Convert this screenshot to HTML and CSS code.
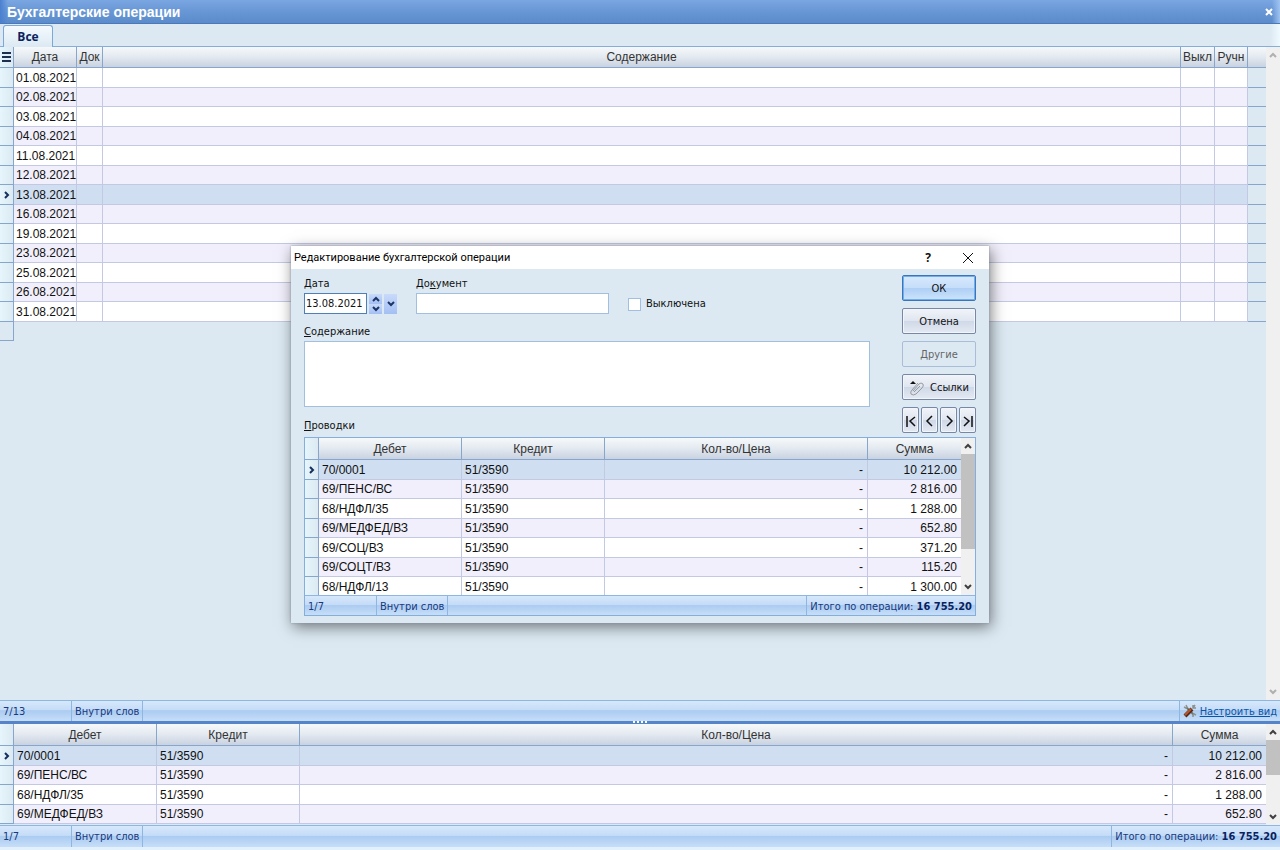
FILE: index.html
```html
<!DOCTYPE html>
<html lang="ru">
<head>
<meta charset="utf-8">
<title>Бухгалтерские операции</title>
<link rel="stylesheet" href="styles.css">
</head>
<body>
<svg class="defs" aria-hidden="true">
  <symbol id="up" viewBox="0 0 8 6"><path d="M1 5 4 2 7 5" fill="none" stroke="currentColor" stroke-width="2"/></symbol>
  <symbol id="down" viewBox="0 0 8 6"><path d="M1 1 4 4 7 1" fill="none" stroke="currentColor" stroke-width="2"/></symbol>
  <symbol id="mark" viewBox="0 0 6 8"><path d="M1 1 4 4 1 7" fill="none" stroke="currentColor" stroke-width="2"/></symbol>
</svg>

<header class="titlebar">
  <h1>Бухгалтерские операции</h1>
  <button class="close" aria-label="Закрыть"><svg width="8" height="8" viewBox="0 0 8 8"><path d="M1 1 7 7M7 1 1 7" stroke="#fff" stroke-width="2"/></svg></button>
</header>
<nav class="tabs"><button class="tab">Все</button></nav>

<main class="pane main-pane">
  <div class="view">
    <table class="grid">
      <colgroup><col class="c-mark"><col class="c-date"><col class="c-doc"><col><col class="c-off"><col class="c-man"><col class="c-end"></colgroup>
      <thead><tr><th class="rh menu"><svg width="9" height="10" viewBox="0 0 9 10"><path d="M0 1H9M0 5H9M0 9H9" stroke="#1d3050" stroke-width="2"/></svg></th><th>Дата</th><th>Док</th><th>Содержание</th><th>Выкл</th><th>Ручн</th><th></th></tr></thead>
      <tbody>
        <tr><td class="rh"></td><td class="day">01.08.2021</td><td></td><td></td><td></td><td></td><td class="re"></td></tr>
        <tr><td class="rh"></td><td class="day">02.08.2021</td><td></td><td></td><td></td><td></td><td class="re"></td></tr>
        <tr><td class="rh"></td><td class="day">03.08.2021</td><td></td><td></td><td></td><td></td><td class="re"></td></tr>
        <tr><td class="rh"></td><td class="day">04.08.2021</td><td></td><td></td><td></td><td></td><td class="re"></td></tr>
        <tr><td class="rh"></td><td class="day">11.08.2021</td><td></td><td></td><td></td><td></td><td class="re"></td></tr>
        <tr><td class="rh"></td><td class="day">12.08.2021</td><td></td><td></td><td></td><td></td><td class="re"></td></tr>
        <tr class="sel"><td class="rh"><svg width="6" height="8"><use href="#mark"/></svg></td><td class="day">13.08.2021</td><td></td><td></td><td></td><td></td><td class="re"></td></tr>
        <tr><td class="rh"></td><td class="day">16.08.2021</td><td></td><td></td><td></td><td></td><td class="re"></td></tr>
        <tr><td class="rh"></td><td class="day">19.08.2021</td><td></td><td></td><td></td><td></td><td class="re"></td></tr>
        <tr><td class="rh"></td><td class="day">23.08.2021</td><td></td><td></td><td></td><td></td><td class="re"></td></tr>
        <tr><td class="rh"></td><td class="day">25.08.2021</td><td></td><td></td><td></td><td></td><td class="re"></td></tr>
        <tr><td class="rh"></td><td class="day">26.08.2021</td><td></td><td></td><td></td><td></td><td class="re"></td></tr>
        <tr><td class="rh"></td><td class="day">31.08.2021</td><td></td><td></td><td></td><td></td><td class="re"></td></tr>
        <tr class="blank"><td class="rh"></td><td colspan="6"></td></tr>
      </tbody>
    </table>
  </div>
  <div class="scroll idle">
    <button aria-label="Вверх"><svg width="8" height="6"><use href="#up"/></svg></button>
    <button aria-label="Вниз"><svg width="8" height="6"><use href="#down"/></svg></button>
  </div>
</main>
<div class="status">
  <span class="count">7/13</span><span class="mode">Внутри слов</span>
  <span class="right setup"><svg width="14" height="14" viewBox="0 0 14 14"><path d="M3 3 11 11" stroke="#6d7674" stroke-width="2"/><path d="M1 3 3 4 4 3 3 1M10 13 10 11 11 10 13 11" fill="none" stroke="#8d9490" stroke-width="1.5"/><path d="M10 4 12 1M13 4 10 4 10 1" fill="none" stroke="#8b918d" stroke-width="1.5"/><path d="M2 12 9 5" stroke="#5b2a16" stroke-width="4"/><path d="M2 11 8 5" stroke="#b5582e" stroke-width="2"/></svg><a href="#setup">Настроить вид</a></span>
</div>
<div class="splitter"><svg width="14" height="3" viewBox="0 0 14 3"><path d="M0 1H14" stroke="#fff" stroke-width="2" stroke-dasharray="2 2"/></svg></div>

<section class="pane">
  <div class="view bottom-view">
    <table class="grid">
      <colgroup><col class="c-mark"><col class="c-acc"><col class="c-acc"><col><col class="c-sum"></colgroup>
      <thead><tr><th class="rh"></th><th>Дебет</th><th>Кредит</th><th>Кол-во/Цена</th><th>Сумма</th></tr></thead>
      <tbody>
        <tr class="sel"><td class="rh"><svg width="6" height="8"><use href="#mark"/></svg></td><td>70/0001</td><td>51/3590</td><td class="num">-</td><td class="num">10 212.00</td></tr>
        <tr><td class="rh"></td><td>69/ПЕНС/ВС</td><td>51/3590</td><td class="num">-</td><td class="num">2 816.00</td></tr>
        <tr><td class="rh"></td><td>68/НДФЛ/35</td><td>51/3590</td><td class="num">-</td><td class="num">1 288.00</td></tr>
        <tr><td class="rh"></td><td>69/МЕДФЕД/ВЗ</td><td>51/3590</td><td class="num">-</td><td class="num">652.80</td></tr>
      </tbody>
    </table>
  </div>
  <div class="scroll">
    <button aria-label="Вверх"><svg width="8" height="6"><use href="#up"/></svg></button>
    <div class="thumb short"></div>
    <button aria-label="Вниз"><svg width="8" height="6"><use href="#down"/></svg></button>
  </div>
</section>
<div class="status last">
  <span class="count">1/7</span><span class="mode">Внутри слов</span>
  <span class="right">Итого по операции: <b>16 755.20</b></span>
</div>

<div class="overlay">
<div class="dialog" role="dialog" aria-labelledby="dlg-title">
  <div class="dlg-head">
    <h2 id="dlg-title">Редактирование бухгалтерской операции</h2>
    <button class="help">?</button>
    <button class="x" aria-label="Закрыть"><svg width="10" height="10" viewBox="0 0 10 10"><path d="M0 0 10 10M10 0 0 10" stroke="#111"/></svg></button>
  </div>
  <div class="dlg-body">
    <div class="form">
      <div class="fields">
        <div class="line">
          <div class="field date">
            <label for="date"><u>Д</u>ата</label>
            <div class="picker">
              <input id="date" type="text" value="13.08.2021">
              <div class="spin"><button aria-label="Больше"><svg width="8" height="6"><use href="#up"/></svg></button><button aria-label="Меньше"><svg width="8" height="6"><use href="#down"/></svg></button></div>
              <button class="drop" aria-label="Календарь"><svg width="8" height="6"><use href="#down"/></svg></button>
            </div>
          </div>
          <div class="field doc"><label for="doc">До<u>к</u>умент</label><input id="doc" type="text"></div>
          <label class="check"><input type="checkbox">Выключена</label>
        </div>
        <div class="field"><label for="text"><u>С</u>одержание</label><textarea id="text"></textarea></div>
        <div class="caption"><u>П</u>роводки</div>
      </div>
      <div class="actions">
        <button class="btn primary">ОК</button>
        <button class="btn">Отмена</button>
        <button class="btn" disabled>Другие</button>
        <button class="btn"><svg width="16" height="16" viewBox="0 0 16 16"><path d="M1 4 4 1 7 4Z" fill="#111"/><path d="M4 11 10 4Q12 2 14 4 15 6 13 8L7 14Q4 16 2 14 1 12 3 10L9 3M5 12 11 6" fill="none" stroke="#999c9e"/></svg>Ссылки</button>
        <div class="moves">
          <button class="btn" aria-label="Первая"><svg width="10" height="12" viewBox="0 0 10 12"><path d="M1 1V12M9 2 4 6 9 11" fill="none" stroke="#111" stroke-width="1.5"/></svg></button>
          <button class="btn" aria-label="Предыдущая"><svg width="10" height="12" viewBox="0 0 10 12"><path d="M7 1 2 6 7 11" fill="none" stroke="#111" stroke-width="1.5"/></svg></button>
          <button class="btn" aria-label="Следующая"><svg width="10" height="12" viewBox="0 0 10 12"><path d="M3 1 8 6 3 11" fill="none" stroke="#111" stroke-width="1.5"/></svg></button>
          <button class="btn" aria-label="Последняя"><svg width="10" height="12" viewBox="0 0 10 12"><path d="M9 1V12M1 2 6 6 1 11" fill="none" stroke="#111" stroke-width="1.5"/></svg></button>
        </div>
      </div>
    </div>
    <div class="entries">
      <div class="pane">
        <div class="view entries-view">
          <table class="grid">
            <colgroup><col class="c-mark"><col class="c-acc"><col class="c-acc"><col><col class="c-sum"></colgroup>
            <thead><tr><th class="rh"></th><th>Дебет</th><th>Кредит</th><th>Кол-во/Цена</th><th>Сумма</th></tr></thead>
            <tbody>
              <tr class="sel"><td class="rh"><svg width="6" height="8"><use href="#mark"/></svg></td><td>70/0001</td><td>51/3590</td><td class="num">-</td><td class="num">10 212.00</td></tr>
              <tr><td class="rh"></td><td>69/ПЕНС/ВС</td><td>51/3590</td><td class="num">-</td><td class="num">2 816.00</td></tr>
              <tr><td class="rh"></td><td>68/НДФЛ/35</td><td>51/3590</td><td class="num">-</td><td class="num">1 288.00</td></tr>
              <tr><td class="rh"></td><td>69/МЕДФЕД/ВЗ</td><td>51/3590</td><td class="num">-</td><td class="num">652.80</td></tr>
              <tr><td class="rh"></td><td>69/СОЦ/ВЗ</td><td>51/3590</td><td class="num">-</td><td class="num">371.20</td></tr>
              <tr><td class="rh"></td><td>69/СОЦТ/ВЗ</td><td>51/3590</td><td class="num">-</td><td class="num">115.20</td></tr>
              <tr><td class="rh"></td><td>68/НДФЛ/13</td><td>51/3590</td><td class="num">-</td><td class="num">1 300.00</td></tr>
            </tbody>
          </table>
        </div>
        <div class="scroll">
          <button aria-label="Вверх"><svg width="8" height="6"><use href="#up"/></svg></button>
          <div class="thumb long"></div>
          <button aria-label="Вниз"><svg width="8" height="6"><use href="#down"/></svg></button>
        </div>
      </div>
      <div class="status">
        <span class="count">1/7</span><span class="mode">Внутри слов</span>
        <span class="right">Итого по операции: <b>16 755.20</b></span>
      </div>
    </div>
  </div>
</div>
</div>
</body>
</html>
```
FILE: styles.css
```css
* { box-sizing: border-box; }

body {
  margin: 0;
  min-height: 100vh;
  display: flex;
  flex-direction: column;
  background: #dce9f2;
  color: #111;
  font: 11px/16px "DejaVu Sans Condensed", "Noto Sans", sans-serif;
}

button, input, textarea {
  margin: 0;
  padding: 0;
  border: 0;
  border-radius: 0;
  background: none;
  color: inherit;
  font: inherit;
}

svg { display: block; flex: none; }
.defs { position: absolute; width: 0; height: 0; }

/* Window title and tabs */
.titlebar {
  display: flex;
  align-items: center;
  justify-content: space-between;
  height: 24px;
  padding: 0 7px;
  background: linear-gradient(90deg, #4a7fd0, transparent 8px, transparent calc(100% - 8px), #9fc4f0), linear-gradient(#7aa7e2, #6a98d6 45%, #5b8bca);
  border-bottom: 1px solid #4a78b8;
  color: #fff;
}
.titlebar h1 { margin: 0; font: bold 14px/22px "Liberation Sans", Arial, sans-serif; }
.tabs {
  height: 23px;
  padding: 1px 3px 0;
  background: linear-gradient(90deg, transparent calc(100% - 10px), #effaff), #dce9f2;
  border-bottom: 1px solid #86aedb;
}
.tab {
  width: 50px;
  height: 22px;
  border: 1px solid #7ba7dc;
  border-bottom: 0;
  border-radius: 3px 3px 0 0;
  background: linear-gradient(#f4fafe, #dce9f2);
  color: #0a2260;
  font: bold 12px/20px "Open Sans", "Noto Sans", sans-serif;
}

/* Data grids */
.pane { display: flex; }
.main-pane { flex: 1; }
.view { flex: 1; min-width: 0; overflow: hidden; }
.bottom-view { height: 101px; }
.entries-view { height: 157px; }

.grid {
  width: 100%;
  table-layout: fixed;
  border-collapse: separate;
  border-spacing: 0;
  font: 12px/16px "Liberation Sans", Arial, sans-serif;
}
.c-mark { width: 14px; }
.c-date { width: 63px; }
.c-doc { width: 26px; }
.c-off { width: 34px; }
.c-man { width: 33px; }
.c-end { width: 18px; }
.c-acc { width: 143px; }
.c-sum { width: 93px; }

.grid th {
  height: 22px;
  padding: 0;
  border-right: 1px solid #87a6cb;
  border-bottom: 1px solid #87a6cb;
  background: linear-gradient(#f6f9fb, #e3e9f0 50%, #c9d2e1);
  color: #333;
  font-weight: normal;
  white-space: nowrap;
}
.main-pane th { height: 21px; }
.grid th:last-child { border-right: 0; }
.grid td {
  height: 19px;
  padding: 0 3px;
  border-right: 1px solid #c3c9e2;
  border-bottom: 1px solid #c3c9e2;
  background: #fff;
  line-height: 18px;
  white-space: nowrap;
}
.grid td.day { padding: 0 2px; }
.grid tr:nth-child(odd) td { height: 20px; }
.grid tr:nth-child(even) td { background: #f0effb; }
.grid tr.sel td { background: #cfdff1; }
.grid td:last-child { border-right: 0; }
.grid td.num { padding-right: 4px; text-align: right; }
.grid tr .rh,
.grid tr td.rh {
  padding: 0 0 0 4px;
  border-color: #87a6cb;
  background: linear-gradient(90deg, #e6f6fc, #dce9f2);
  color: #14305e;
}
.grid tr .menu { padding: 0 0 0 2px; }
.grid tr td.re { border-color: #87a6cb; background: #dce9f2; }
.grid tr.blank td { border: 0; background: none; }
.grid tr.blank td.rh { border: solid #87a6cb; border-width: 0 1px 1px 0; }

.scroll {
  display: flex;
  flex-direction: column;
  width: 14px;
  background: #f0f0f0;
  color: #404040;
}
.scroll button {
  display: flex;
  align-items: center;
  justify-content: center;
  height: 16px;
}
.scroll button:last-child { margin-top: auto; }
.idle { color: #b0b0b0; }
.thumb { background: #c1c1c1; }
.short { height: 35px; }
.long { height: 95px; }

/* Status bars */
.status {
  display: flex;
  height: 21px;
  border-top: 1px solid #8fb5e2;
  background: linear-gradient(#d6e8fb, #c5dcf7 45%, #abcbf1 48%, #c6def8);
  color: #17397e;
  line-height: 21px;
}
.count { width: 72px; padding-left: 3px; border-right: 1px solid #8fb5e2; }
.mode { padding: 0 3px; border-right: 1px solid #8fb5e2; }
.right { margin-left: auto; padding: 0 3px; border-left: 1px solid #8fb5e2; }
.right b { color: #0a2260; font-family: "DejaVu Sans Condensed", sans-serif; }
.setup { display: flex; align-items: center; gap: 3px; }
.setup a { color: #0b55a8; }
.last { height: 25px; border-bottom: 3px solid #e3f1fc; }
.splitter { display: flex; justify-content: center; height: 3px; background: #5585c8; }

/* Operation editor */
.overlay {
  position: absolute;
  inset: 0;
  display: flex;
  justify-content: center;
  align-items: flex-start;
  padding-top: 246px;
}
.dialog {
  width: 698px;
  background: #dce9f2;
  box-shadow: 0 0 2px #8a94a6, 2px 4px 14px rgba(0, 0, 0, .5);
}
.dlg-head {
  display: flex;
  align-items: center;
  height: 23px;
  padding: 0 16px 0 3px;
  background: #fff;
}
.dlg-head h2 { flex: 1; margin: 0; font: 11px/16px Roboto, "Noto Sans", sans-serif; color: #000; }
.help { width: 20px; margin-right: 25px; font: bold 12px/16px "Noto Sans", sans-serif; }
.dlg-body { padding: 6px 13px 7px; }
.form { display: flex; justify-content: space-between; margin-bottom: 2px; }
.fields { width: 566px; }
.field { display: flex; flex-direction: column; }
.field label, .caption { line-height: 18px; }
.line { display: flex; margin-bottom: 9px; }
.date { width: 112px; }
.doc { width: 193px; }
.field input, .field textarea {
  border: 1px solid #a3bfe0;
  background: #fff;
}
.field input { height: 21px; }
.field textarea { height: 66px; resize: none; }
.picker { display: flex; align-items: center; gap: 2px; }
.picker input { width: 63px; padding-left: 1px; border-color: #4f7fb8; }
.spin { display: flex; flex-direction: column; }
.spin button, .drop {
  display: flex;
  align-items: center;
  justify-content: center;
  width: 13px;
  height: 10px;
  background: linear-gradient(#c9dafa, #a3bff3);
  color: #1c3566;
}
.drop { height: 20px; }
.check { display: flex; align-items: center; gap: 5px; height: 18px; margin: 20px 0 0 19px; }
.check input {
  appearance: none;
  width: 13px;
  height: 13px;
  border: 1px solid #a3bfe0;
  background: #fff;
}
.caption { margin-top: 10px; }

.actions { display: flex; flex-direction: column; gap: 7px; width: 74px; }
.btn {
  display: flex;
  align-items: center;
  justify-content: center;
  gap: 5px;
  height: 26px;
  padding-top: 1px;
  border: 1px solid #7688a6;
  border-radius: 2px;
  background: linear-gradient(#f1f4f9, #e0e6f0 48%, #cfd8e8 50%, #e4eaf3);
  box-shadow: inset 0 0 0 1px #f2f6fb;
}
.primary {
  border-color: #3a75bb;
  background: linear-gradient(#d8e9fd, #c6def9 48%, #aecef5 50%, #cde4fc);
  box-shadow: inset 0 0 0 1px #72aeea;
}
.btn:disabled { border-color: #aabdd8; background: none; box-shadow: none; color: #666; }
.moves { display: flex; gap: 2px; }
.moves .btn { flex: 1; }

.entries { border: 1px solid #86aedb; }
.entries .status { height: 20px; }
```
